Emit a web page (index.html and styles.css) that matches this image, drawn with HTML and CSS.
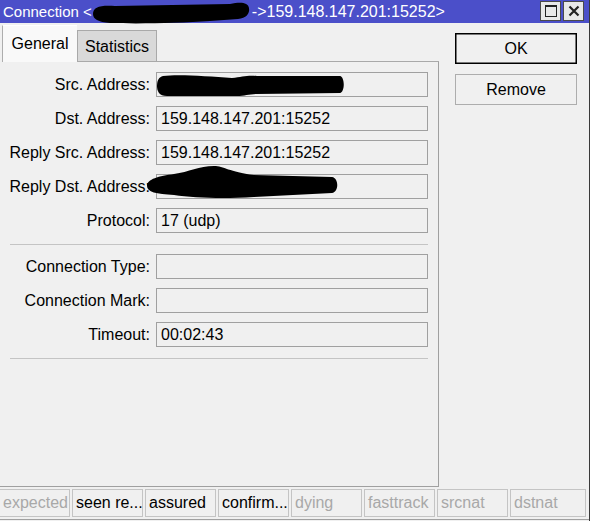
FILE: index.html
```html
<!DOCTYPE html>
<html>
<head>
<meta charset="utf-8">
<link rel="stylesheet" href="styles.css">
</head>
<body>
<div class="window">
  <div class="titlebar">
    <span class="title-text">Connection &lt;</span>
    <svg class="title-redact" width="161" height="23" viewBox="0 0 161 23"><path d="M3,14 C3,7 10,5 25,6 L140,4 C150,2 158,2 159,8 C160,14 156,18 148,19 L120,21 C90,23 50,24 20,23 C8,22 3,19 3,14 Z" fill="#000"/></svg>
    <span class="title-text title-ip">-&gt;159.148.147.201:15252&gt;</span>
    <div class="tb-buttons">
      <div class="tb-btn"><svg width="14" height="14" viewBox="0 0 14 14"><rect x="1.5" y="1.5" width="11" height="11" fill="none" stroke="#222" stroke-width="1"/><rect x="1" y="1" width="12" height="2" fill="#222"/></svg></div>
      <div class="tb-btn"><svg width="14" height="14" viewBox="0 0 14 14"><path d="M2.5,2.5 L11.5,11.5 M11.5,2.5 L2.5,11.5" stroke="#222" stroke-width="2.2"/></svg></div>
    </div>
  </div>
  <div class="main">
    <div class="left">
      <div class="tabs">
        <div class="tab active">General</div>
        <div class="tab">Statistics</div>
        <div class="tab-fill"></div>
      </div>
      <div class="panel">
        <div class="row"><div class="label">Src. Address:</div><div class="field"><svg class="redact" width="190" height="25" viewBox="0 0 190 25"><path d="M6,3 C20,1 50,3 75,5 C85,4 90,2 100,3 L183,3 C188,4 188,19 183,20 L100,21 C92,21 88,23 80,23 L10,23 C2,23 0,18 0,13 C0,7 2,4 6,3 Z" fill="#000"/></svg></div></div>
        <div class="row"><div class="label">Dst. Address:</div><div class="field">159.148.147.201:15252</div></div>
        <div class="row"><div class="label">Reply Src. Address:</div><div class="field">159.148.147.201:15252</div></div>
        <div class="row"><div class="label">Reply Dst. Address:</div><div class="field"><svg class="redact redact-dst" width="198" height="38" viewBox="0 0 198 38"><path d="M3,22 C3,15 15,12 30,10 C45,8 55,2 70,2 C80,2 85,8 110,11 L188,13 C195,14 195,28 188,29 L110,33 C80,35 50,34 30,31 C12,30 3,28 3,22 Z" fill="#000"/></svg></div></div>
        <div class="row"><div class="label">Protocol:</div><div class="field">17 (udp)</div></div>
        <div class="sep"></div>
        <div class="row"><div class="label">Connection Type:</div><div class="field"></div></div>
        <div class="row"><div class="label">Connection Mark:</div><div class="field"></div></div>
        <div class="row"><div class="label">Timeout:</div><div class="field">00:02:43</div></div>
        <div class="sep"></div>
      </div>
    </div>
    <div class="right">
      <div class="btn default">OK</div>
      <div class="btn">Remove</div>
    </div>
  </div>
  <div class="status">
    <div class="cells">
      <div class="cell off">expected</div>
      <div class="cell">seen re...</div>
      <div class="cell">assured</div>
      <div class="cell">confirm...</div>
      <div class="cell off">dying</div>
      <div class="cell off">fasttrack</div>
      <div class="cell off">srcnat</div>
      <div class="cell off last">dstnat</div>
    </div>
  </div>
</div>
</body>
</html>
```
FILE: styles.css
```css
* { box-sizing: border-box; }
html, body { margin: 0; padding: 0; background: #ffffff; }
body {
  font-family: "Liberation Sans", Arial, sans-serif;
  font-size: 16px;
  color: #000;
}
.window {
  width: 590px;
  height: 521px;
  background: #f0f0f0;
  border-right: 1px solid #3a3a3a;
  display: flex;
  flex-direction: column;
  overflow: hidden;
}
.titlebar {
  height: 23px;
  flex: none;
  background: #4b4fc9;
  color: #fff;
  display: flex;
  align-items: center;
  padding-left: 3px;
  font-size: 15px;
}
.title-text { white-space: nowrap; }
.title-ip { font-size: 16px; margin-left: 1px; }
.title-redact { display: block; overflow: visible; margin-left: -2px; align-self: flex-start; }
.tb-buttons {
  margin-left: auto;
  display: flex;
  gap: 2px;
  padding-right: 5px;
  align-self: flex-start;
  padding-top: 1px;
}
.tb-btn {
  width: 21px;
  height: 20px;
  background: #e8e8e8;
  border: 1px solid #4a4a4a;
  display: flex;
  align-items: center;
  justify-content: center;
}
.main {
  display: flex;
  height: 464px;
  flex: none;
}
.left {
  width: 439px;
  display: flex;
  flex-direction: column;
}
.tabs {
  height: 39px;
  display: flex;
  align-items: flex-end;
  padding-left: 2px;
}
.tab {
  display: flex;
  align-items: center;
  justify-content: center;
  white-space: nowrap;
}
.tab.active {
  width: 75px;
  height: 37px;
  background: #f9f9f9;
  border-left: 1px solid #adadad;
  border-top: 1px solid #ffffff;
}
.tab:not(.active) {
  width: 80px;
  height: 32px;
  background: #d9d9d9;
  border: 1px solid #a9a9a9;
  padding-top: 1px;
}
.tab-fill {
  flex: 1;
  height: 1px;
  border-bottom: 1px solid #a9a9a9;
  border-right: 1px solid #a9a9a9;
}
.panel {
  height: 425px;
  border-right: 1px solid #a0a0a0;
  border-bottom: 1px solid #a0a0a0;
  padding: 10px 10px 0 2px;
  display: flex;
  flex-direction: column;
  gap: 9px;
}
.row {
  display: flex;
  align-items: center;
  gap: 6px;
  height: 25px;
}
.label {
  width: 148px;
  text-align: right;
  white-space: nowrap;
}
.field {
  position: relative;
  width: 272px;
  height: 25px;
  border: 1px solid #a0a0a0;
  background: #f0f0f0;
  padding-left: 4px;
  display: flex;
  align-items: center;
  white-space: nowrap;
}
.redact {
  position: absolute;
  left: 0;
  top: 0;
}
.redact-dst {
  left: -13px;
  top: -11px;
}
.sep {
  height: 1px;
  margin: 2px 0 0 8px;
  width: 418px;
  background: #c4c4c4;
}
.right {
  width: 150px;
  padding: 10px 0 0 16px;
  display: flex;
  flex-direction: column;
  gap: 10px;
}
.btn {
  width: 122px;
  height: 31px;
  border: 1px solid #adadad;
  background: #f0f0f0;
  display: flex;
  align-items: center;
  justify-content: center;
}
.btn.default {
  border: 1px solid #000;
  box-shadow: inset 0 0 0 0.5px #000;
}
.status {
  height: 34px;
  flex: none;
  padding-top: 2px;
}
.cells {
  display: flex;
  gap: 2px;
  margin-left: -1px;
  margin-right: 3px;
  height: 28px;
}
.status::after {
  content: "";
  display: block;
  height: 1px;
  margin-top: 2px;
  background: #a0a0a0;
}
.cell {
  width: 71px;
  flex: none;
  height: 28px;
  border: 1px solid #c4c4c4;
  padding-left: 3px;
  display: flex;
  align-items: center;
  white-space: nowrap;
  overflow: hidden;
}
.cell.last { flex: 1; }
.cell.off { color: #a8a8a8; }
```
